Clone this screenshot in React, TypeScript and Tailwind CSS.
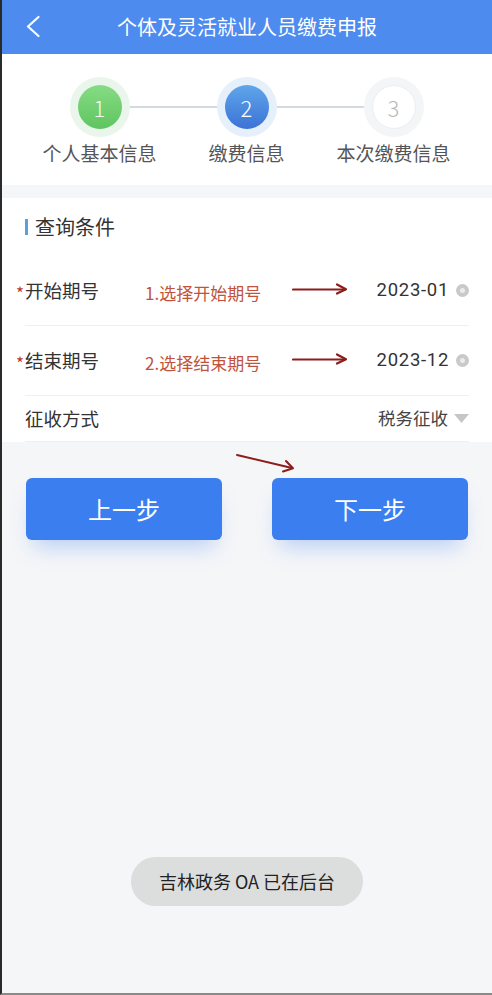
import React from "react";

const font = { fontFamily: '"Noto Sans CJK SC", "Noto Sans", sans-serif' };

function Step({ n, label, kind, left, right }: { n: number; label: string; kind: "done" | "active" | "todo"; left?: boolean; right?: boolean }) {
  const halo = kind === "done" ? "bg-[#eaf5ec]" : kind === "active" ? "bg-[#e6f0fa]" : "bg-[#f4f5f6]";
  const dot =
    kind === "done"
      ? "bg-gradient-to-b from-[#86dc84] to-[#5ec55f] text-white/90"
      : kind === "active"
        ? "bg-gradient-to-b from-[#5fa6ea] to-[#3d72d6] text-white"
        : "bg-white border border-[#eceef0] text-[#b8b8b8]";
  return (
    <div className="flex w-[147px] flex-col items-center">
      <div className="flex w-full items-center">
        <div className={`h-[2px] flex-1 ${left ? "bg-[#d4dae1]" : ""}`} />
        <div className={`flex h-[60px] w-[60px] items-center justify-center rounded-full ${halo}`}>
          <div className={`flex h-[44px] w-[44px] items-center justify-center rounded-full text-[22px] font-light ${dot}`}>{n}</div>
        </div>
        <div className={`h-[2px] flex-1 ${right ? "bg-[#d4dae1]" : ""}`} />
      </div>
      <div className="mt-[3px] text-[19px] leading-[26px] text-[#555]">{label}</div>
    </div>
  );
}

function Arrow() {
  return (
    <svg width="56" height="12" viewBox="0 0 56 12" fill="none">
      <path d="M1 6.5 H53" stroke="#8c1d1a" strokeWidth="2.2" strokeLinecap="round" />
      <path d="M45 1.5 L54 6.2 L45 10.5" stroke="#8c1d1a" strokeWidth="2.2" strokeLinecap="round" strokeLinejoin="round" />
    </svg>
  );
}

function Ring() {
  return (
    <div className="ml-[7px] flex h-[13px] w-[13px] items-center justify-center rounded-full bg-[#c9c9c9]">
      <div className="h-[5px] w-[5px] rounded-full bg-[#ececec]" />
    </div>
  );
}

function DateRow({ label, value, note }: { label: string; value: string; note: string }) {
  return (
    <div className="relative flex h-[70px] items-center border-b border-[#eef0f2]">
      <span className="absolute -left-[9px] top-[24px] text-[17px] text-[#c0392b]">*</span>
      <span className="text-[18.5px] text-[#333]">{label}</span>
      <div className="absolute left-[120px] top-[24px] flex items-center">
        <span className="text-[17px] text-[#c1533d]">{note}</span>
      </div>
      <div className="absolute left-[267px] top-[27px]">
        <Arrow />
      </div>
      <div className="ml-auto flex items-center">
        <span className="font-['Roboto'] text-[18.5px] tracking-[0.7px] text-[#333]">{value}</span>
        <Ring />
      </div>
    </div>
  );
}

export default function App() {
  return (
    <div style={font} className="relative flex h-[995px] w-full flex-col border-b-2 border-l-2 border-b-[#8a8a8a] border-l-[#2a2a2a] bg-[#f5f6f8]">
      <div className="relative flex h-[54px] items-center justify-center bg-[#4e8bef]">
        <svg className="absolute left-[23px] top-[15px]" width="16" height="23" viewBox="0 0 16 23" fill="none">
          <path d="M13.5 2 L3 11.5 L13.5 21" stroke="white" strokeWidth="2.2" strokeLinecap="round" strokeLinejoin="round" />
        </svg>
        <span className="text-[20px] text-white">个体及灵活就业人员缴费申报</span>
      </div>

      <div className="flex h-[131px] bg-white pl-[24px] pt-[23px]">
        <Step n={1} label="个人基本信息" kind="done" right />
        <Step n={2} label="缴费信息" kind="active" left right />
        <Step n={3} label="本次缴费信息" kind="todo" left />
      </div>

      <div className="mt-[13px] bg-white px-[23px]">
        <div className="flex h-[58px] items-center">
          <div className="h-[16px] w-[3px] bg-[#5b9fdc]" />
          <span className="ml-[7px] text-[20px] text-[#333]">查询条件</span>
        </div>
        <DateRow label="开始期号" value="2023-01" note="1.选择开始期号" />
        <DateRow label="结束期号" value="2023-12" note="2.选择结束期号" />
        <div className="flex h-[46px] items-center border-b border-[#eef0f2]">
          <span className="text-[18.5px] text-[#333]">征收方式</span>
          <span className="ml-auto text-[17.5px] text-[#444]">税务征收</span>
          <svg className="ml-[6px]" width="15" height="10" viewBox="0 0 15 10">
            <path d="M0 0 H15 L7.5 9 Z" fill="#c6c6c6" />
          </svg>
        </div>
      </div>

      <div className="relative mt-[36px] flex justify-between px-[24px]">
        <svg className="absolute left-[232px] top-[-26px]" width="64" height="22" viewBox="0 0 64 22" fill="none">
          <path d="M3 3 L58 16" stroke="#8c1d1a" strokeWidth="2" strokeLinecap="round" />
          <path d="M49 19.5 L59 16.2 L52 9" stroke="#8c1d1a" strokeWidth="2" strokeLinecap="round" strokeLinejoin="round" />
        </svg>
        <button className="flex h-[62px] w-[196px] items-center justify-center rounded-[6px] bg-[#3b7ef0] text-[24px] text-white shadow-[0_14px_22px_-8px_rgba(59,126,240,0.35)]">
          上一步
        </button>
        <button className="flex h-[62px] w-[196px] items-center justify-center rounded-[6px] bg-[#3b7ef0] text-[24px] text-white shadow-[0_14px_22px_-8px_rgba(59,126,240,0.35)]">
          下一步
        </button>
      </div>

      <div className="absolute left-[129px] top-[857px] flex h-[49px] w-[232px] items-center justify-center rounded-full bg-[#dcdddd] text-[18px] text-[#222]">
        吉林政务 OA 已在后台
      </div>
    </div>
  );
}
